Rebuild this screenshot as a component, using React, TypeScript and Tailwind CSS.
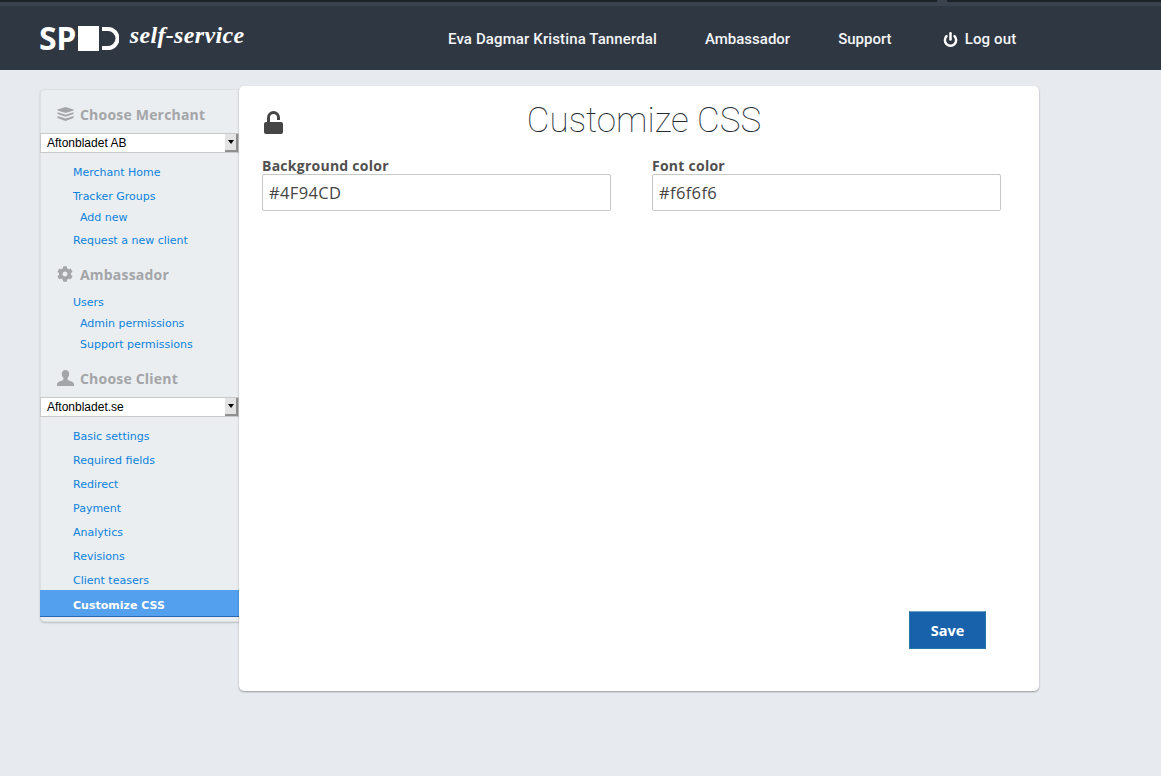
import { Power } from "lucide-react";
import { FaCog } from "react-icons/fa";

const sidebarFont = "[font-family:'DejaVu_Sans',Verdana,sans-serif]";

function Lnk({ children, sub }: { children: string; sub?: boolean }) {
  return (
    <a className={`block text-[11px] leading-[14px] text-[#0a82dc] ${sub ? "pl-[39px]" : "pl-[32px]"}`}>{children}</a>
  );
}

function Heading({ icon, children }: { icon: React.ReactNode; children: string }) {
  return (
    <div className="flex items-center h-[24px] pl-[16px] text-[#a3a5a8]">
      <span className="w-[23px] flex justify-start">{icon}</span>
      <span className="text-[14px] font-bold [font-family:'Open_Sans',sans-serif] tracking-[0.2px]">{children}</span>
    </div>
  );
}

function Sel({ children }: { children: string }) {
  return (
    <div className="h-[20px] -ml-[1px] bg-white border border-[#c9c9c9] flex items-center justify-between [font-family:'Liberation_Sans',sans-serif] text-[12px] text-black">
      <span className="pl-[6px]">{children}</span>
      <span className="w-[13px] h-[18px] bg-[#e3e3e3] border-r-2 border-b-2 border-[#8f8f8f] flex items-center justify-center">
        <span className="w-0 h-0 border-l-[3px] border-r-[3px] border-t-[4px] border-l-transparent border-r-transparent border-t-black" />
      </span>
    </div>
  );
}

export default function App() {
  return (
    <div className="min-h-[776px] bg-[#e7eaef] overflow-hidden">
      <header className="h-[70px] bg-[#2f3743] border-t-[2px] border-[#1d2128] [font-family:'Roboto',sans-serif] relative">
        <span className="absolute left-[937px] -top-[2px] w-[10px] h-[2px] bg-[#3a424d]" />
        <div className="h-[4px] bg-[#3a424d]" />
        <div className="flex items-center h-[64px] pt-[2px]">
          <div className="ml-[39px] w-[218px] flex items-center text-white">
            <span className="text-[32px] font-bold leading-none tracking-[-0.5px] [font-family:'Open_Sans',sans-serif] -mt-[2px]">SP</span>
            <span className="w-[21px] h-[25px] bg-white ml-[2px] -mt-[2px]" />
            <svg width="17" height="25" viewBox="0 0 17 25" className="ml-[3px] -mt-[2px]">
              <path d="M0 3h6a9.5 9.5 0 0 1 0 19H0" fill="none" stroke="#fff" strokeWidth="4" />
            </svg>
            <span className="ml-[11px] -mt-[8px] text-[24px] font-bold italic leading-none tracking-[0.35px] whitespace-nowrap [font-family:'Liberation_Serif',serif]">self-service</span>
          </div>
          <nav className="flex items-center text-[15px] font-medium text-[#f5f6f7]">
            <span className="ml-[191px] tracking-[0.12px]">Eva Dagmar Kristina Tannerdal</span>
            <span className="ml-[48px]">Ambassador</span>
            <span className="ml-[48px]">Support</span>
            <Power size={15} strokeWidth={4} className="ml-[51px] text-white" />
            <span className="ml-[7px] tracking-[0.15px]">Log out</span>
          </nav>
        </div>
      </header>

      <main className="flex items-start pl-[40px] pt-[16px]">
        <aside className={`w-[199px] h-[533px] mt-[3px] bg-[#ebeef1] border border-[#dcdfe3] border-r-0 rounded-l-[5px] shadow-[0_1px_2px_rgba(0,0,0,0.2)] ${sidebarFont} pt-[12px]`}>
          <Heading icon={
            <svg width="17" height="14" viewBox="0 0 17 14" fill="currentColor">
              <path d="M8.500 0 16.500 2.500v1L8.500 6 .500 3.500v-1z" />
              <path d="M.500 5.300 8.500 7.800l8-2.500v1.800L8.500 9.800 .500 7.100z" />
              <path d="M.500 9 8.500 11.500l8-2.500v2L8.500 14 .500 11z" />
            </svg>
          }>Choose Merchant</Heading>
          <div className="mt-[7px]"><Sel>Aftonbladet AB</Sel></div>
          <div className="mt-[13px] flex flex-col gap-[10px]">
            <Lnk>Merchant Home</Lnk>
            <div className="flex flex-col gap-[7px]">
              <Lnk>Tracker Groups</Lnk>
              <Lnk sub>Add new</Lnk>
            </div>
            <div className="-mt-[1px]"><Lnk>Request a new client</Lnk></div>
          </div>
          <div className="mt-[14px]"><Heading icon={<FaCog size={16} />}>Ambassador</Heading></div>
          <div className="mt-[10px] flex flex-col gap-[7px]">
            <Lnk>Users</Lnk>
            <Lnk sub>Admin permissions</Lnk>
            <Lnk sub>Support permissions</Lnk>
          </div>
          <div className="mt-[14px]"><Heading icon={
            <svg width="17" height="16" viewBox="0 0 17 16" fill="currentColor">
              <path d="M8.500 0c2.300 0 3.700 1.700 3.700 4 0 1.600-.7 3-1.600 3.800v1.400c0 .7 1 1.100 2.500 1.700 2 .8 3.900 1.500 3.900 3.100v2H0v-2c0-1.600 1.900-2.300 3.900-3.100 1.500-.6 2.500-1 2.500-1.700V7.800C5.500 7 4.800 5.600 4.800 4c0-2.300 1.400-4 3.700-4z" />
            </svg>
          }>Choose Client</Heading></div>
          <div className="mt-[7px]"><Sel>Aftonbladet.se</Sel></div>
          <div className="mt-[13px] flex flex-col gap-[10px]">
            <Lnk>Basic settings</Lnk>
            <Lnk>Required fields</Lnk>
            <Lnk>Redirect</Lnk>
            <Lnk>Payment</Lnk>
            <Lnk>Analytics</Lnk>
            <Lnk>Revisions</Lnk>
            <Lnk>Client teasers</Lnk>
          </div>
          <div className="mt-[2px] -ml-[1px] h-[27px] bg-[#53a0ee] border-b border-[#2a6ab5] pl-[33px] pt-[6px] flex items-center text-[11px] font-bold text-white">Customize CSS</div>
        </aside>

        <section className="w-[800px] h-[605px] bg-white rounded-[5px] shadow-[0_1px_2px_rgba(0,0,0,0.35)] flex flex-col px-[23px]">
          <div className="relative h-[71px] pt-[11px] pl-[10px] text-center text-[35px] leading-[48px] font-thin text-[#222a32] [font-family:'Roboto',sans-serif]">
            <svg width="22" height="24" viewBox="0 0 22 24" className="absolute left-0 top-[25px]">
              <path d="M6.500 12V6.500a5 5 0 0 1 10 0V9" fill="none" stroke="#454545" strokeWidth="3" />
              <rect x="2" y="11" width="19" height="12" rx="2" fill="#454545" />
            </svg>
            Customize CSS
          </div>
          <div className="flex gap-[41px] [font-family:'Open_Sans',sans-serif]">
            <div className="w-[349px]">
              <label className="block text-[14px] font-bold leading-[17px] tracking-[0.25px] text-[#51504f]">Background color</label>
              <div className="h-[37px] border border-[#c8c8c8] rounded-[2px] pl-[6px] pt-[2px] flex items-center text-[16.500px] tracking-[0.35px] text-[#444]">#4F94CD</div>
            </div>
            <div className="w-[349px]">
              <label className="block text-[14px] font-bold leading-[17px] tracking-[0.25px] text-[#51504f]">Font color</label>
              <div className="h-[37px] border border-[#c8c8c8] rounded-[2px] pl-[6px] pt-[2px] flex items-center text-[16.500px] tracking-[0.35px] text-[#444]">#f6f6f6</div>
            </div>
          </div>
          <div className="flex-1 flex justify-end items-start pr-[30px] pt-[400px]">
            <button className="w-[77px] h-[38px] pt-[1px] bg-[#1862ab] border border-[#2579a8] border-t-[#6fa3c5] text-white text-[14.500px] font-bold [font-family:'Open_Sans',sans-serif]">Save</button>
          </div>
        </section>
      </main>
    </div>
  );
}
